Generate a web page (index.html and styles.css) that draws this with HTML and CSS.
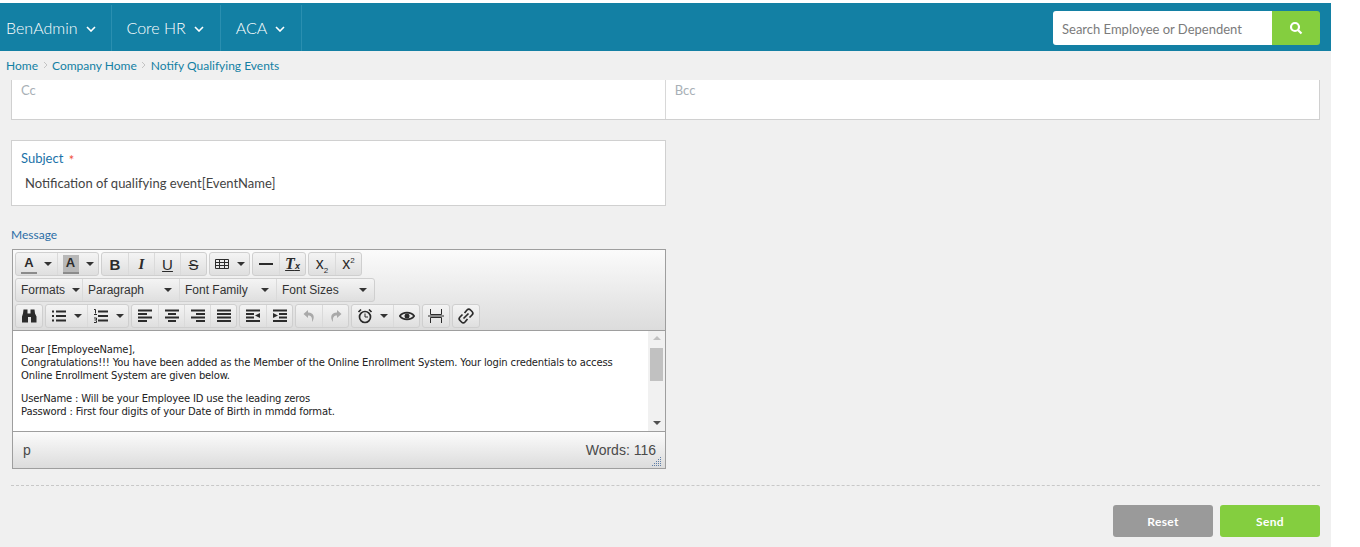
FILE: index.html
```html
<!DOCTYPE html>
<html lang="en">
<head>
<meta charset="utf-8">
<title>Notify Qualifying Events</title>
<link rel="stylesheet" href="styles.css">
</head>
<body>
<div class="page">
  <header class="topbar">
    <nav class="mainnav">
      <a class="navitem navfirst">BenAdmin <svg class="chev" viewBox="0 0 10 6"><path d="M1 1l4 4 4-4"/></svg></a>
      <a class="navitem">Core HR <svg class="chev" viewBox="0 0 10 6"><path d="M1 1l4 4 4-4"/></svg></a>
      <a class="navitem">ACA <svg class="chev" viewBox="0 0 10 6"><path d="M1 1l4 4 4-4"/></svg></a>
    </nav>
    <form class="search">
      <span class="searchinput">Search Employee or Dependent</span>
      <span class="searchbtn"><svg viewBox="0 0 14 14" class="searchicon"><circle cx="6" cy="6" r="4"/><path d="M9 9l3.5 3.5"/></svg></span>
    </form>
  </header>
  <div class="crumbs"><a>Home</a><svg class="sep" viewBox="0 0 5 8"><path d="M1 1l3 3-3 3"/></svg><a>Company Home</a><svg class="sep" viewBox="0 0 5 8"><path d="M1 1l3 3-3 3"/></svg><a>Notify Qualifying Events</a></div>
  <main class="content">
    <div class="ccrow">
      <div class="cccell">Cc</div>
      <div class="cccell">Bcc</div>
    </div>
    <div class="subject">
      <div class="subjectlabel">Subject <span class="req">*</span></div>
      <div class="subjectvalue">Notification of qualifying event[EventName]</div>
    </div>
    <div class="msglabel">Message</div>
    <div class="editor">
      <div class="toolbars">
        <div class="tbrow">
          <div class="grp">
            <span class="btn w42"><span class="colora">A</span><i class="caret"></i></span>
            <span class="btn w42"><span class="colora shaded">A</span><i class="caret"></i></span>
          </div>
          <div class="grp">
            <span class="btn"><b class="fmt">B</b></span><span class="btn"><i class="fmt italicf">I</i></span><span class="btn"><u class="fmt">U</u></span><span class="btn"><s class="fmt">S</s></span>
          </div>
          <div class="grp">
            <span class="btn w41"><svg class="ic" viewBox="0 0 16 16"><path class="thin" d="M1.500 3.500h13v9h-13zM1.500 6.500h13M1.500 9.500h13M5.500 3.500v9M10.500 3.500v9"/></svg><i class="caret"></i></span>
          </div>
          <div class="grp">
            <span class="btn w27"><svg class="ic" viewBox="0 0 16 16"><path class="thick" d="M1 8h14"/></svg></span>
            <span class="btn w27"><span class="clearf">T<small>x</small></span></span>
          </div>
          <div class="grp">
            <span class="btn w27"><span class="script">x<sub>2</sub></span></span>
            <span class="btn w27"><span class="script">x<sup>2</sup></span></span>
          </div>
        </div>
        <div class="tbrow">
          <div class="grp">
            <span class="btn sel w67">Formats<i class="caret"></i></span>
            <span class="btn sel w97">Paragraph<i class="caret"></i></span>
            <span class="btn sel w97">Font Family<i class="caret"></i></span>
            <span class="btn sel w99">Font Sizes<i class="caret"></i></span>
          </div>
        </div>
        <div class="tbrow">
          <div class="grp">
            <span class="btn w28"><svg class="ic" viewBox="0 0 16 16"><path class="fill" d="M2.500 1.500h4v4h3v-4h4l.5 4 1.500 3v6h-5.500V9h-3v5.500H1v-6l1-3z"/></svg></span>
          </div>
          <div class="grp">
            <span class="btn w42"><svg class="ic" viewBox="0 0 16 16"><path class="dash" d="M1 3.500h2M1 8h2M1 12.500h2M5 3.500h10M5 8h10M5 12.500h10"/></svg><i class="caret"></i></span>
            <span class="btn w42"><svg class="ic" viewBox="0 0 16 16"><path class="dash" d="M5 3.500h10M5 8h10M5 12.500h10"/><path class="thin" d="M1 1.500h1.500v4M1 6.500h3M1 10h2.500v2H1.500M1 14.500h2.500v-2"/></svg><i class="caret"></i></span>
          </div>
          <div class="grp">
            <span class="btn"><svg class="ic" viewBox="0 0 16 16"><path class="dash" d="M1 2.500h14M1 6h9M1 9.500h14M1 13h9"/></svg></span>
            <span class="btn"><svg class="ic" viewBox="0 0 16 16"><path class="dash" d="M1 2.500h14M4 6h8M1 9.500h14M4 13h8"/></svg></span>
            <span class="btn"><svg class="ic" viewBox="0 0 16 16"><path class="dash" d="M1 2.500h14M6 6h9M1 9.500h14M6 13h9"/></svg></span>
            <span class="btn"><svg class="ic" viewBox="0 0 16 16"><path class="dash" d="M1 2.500h14M1 6h14M1 9.500h14M1 13h14"/></svg></span>
          </div>
          <div class="grp">
            <span class="btn w27"><svg class="ic" viewBox="0 0 16 16"><path class="dash" d="M1 2.500h14M1 13h14M1 6h8M1 9.500h8"/><path class="fill" d="M15 5v5l-5-2.500z"/></svg></span>
            <span class="btn w27"><svg class="ic" viewBox="0 0 16 16"><path class="dash" d="M1 2.500h14M1 13h14M7 6h8M7 9.500h8"/><path class="fill" d="M1 5v5l5-2.500z"/></svg></span>
          </div>
          <div class="grp">
            <span class="btn w27"><svg class="ic" viewBox="0 0 16 16"><path class="faded" d="M7 2L2.500 6 7 10V7.500c3 0 4.500 1.500 4 6.500 3-4 2.500-9.500-4-9.500z"/></svg></span>
            <span class="btn w27"><svg class="ic" viewBox="0 0 16 16"><path class="faded" d="M9 2l4.500 4L9 10V7.500c-3 0-4.500 1.500-4 6.500-3-4-2.500-9.500 4-9.500z"/></svg></span>
          </div>
          <div class="grp">
            <span class="btn w42"><svg class="ic" viewBox="0 0 16 16"><circle class="thick2" cx="8" cy="9" r="5.500"/><path class="thin" d="M8 5.500V9h3"/><path class="thick2" d="M1.500 4L4 1.500M14.500 4L12 1.500"/></svg><i class="caret"></i></span>
            <span class="btn w27"><svg class="ic" viewBox="0 0 16 16"><path class="thick2" d="M.800 8C4 3.500 12 3.500 15.200 8 12 12.500 4 12.500.800 8z"/><circle class="fill" cx="8" cy="8" r="2.500"/></svg></span>
          </div>
          <div class="grp">
            <span class="btn w28"><svg class="ic" viewBox="0 0 16 16"><path class="thin" d="M2.500 1v5.500h11V1M2.500 15V9.500h11V15M0 8h16"/></svg></span>
          </div>
          <div class="grp">
            <span class="btn w28"><svg class="ic" viewBox="0 0 16 16"><path class="thick2" d="M6.500 5l2.500-3c1-1 2.500-1 3.500 0l1.500 1.500c1 1 1 2.500 0 3.500l-2.500 2.500M9.500 11L7 14c-1 1-2.500 1-3.500 0L2 12.500c-1-1-1-2.500 0-3.500l2.500-2.500M5.500 10.500l5-5"/></svg></span>
          </div>
        </div>
      </div>
      <div class="editbody">
        <div class="edittext">
          <p>Dear [EmployeeName],<br>Congratulations!!! You have been added as the Member of the Online Enrollment System. Your login credentials to access Online Enrollment System are given below.</p>
          <p>UserName : Will be your Employee ID use the leading zeros<br>Password : First four digits of your Date of Birth in mmdd format.</p>
        </div>
        <div class="scrollbar">
          <i class="arrowup"></i>
          <div class="thumb"></div>
          <i class="arrowdown"></i>
        </div>
      </div>
      <div class="statusbar">
        <span>p</span>
        <span>Words: 116</span>
        <svg class="grip" viewBox="0 0 10 10"><path d="M8 1.500h2M6 3.500h4M4 5.500h6M2 7.500h8M0 9.500h10"/></svg>
      </div>
    </div>
    <hr class="rule">
    <div class="actions">
      <span class="action reset">Reset</span>
      <span class="action send">Send</span>
    </div>
  </main>
</div>
</body>
</html>
```
FILE: styles.css
```css
* { box-sizing: border-box; }
html, body { margin: 0; padding: 0; background: #fff; }
body { font-family: "Lato", sans-serif; overflow: hidden; height: 547px; }
.page { width: 1331px; height: 547px; background: #f0f0f0; padding-top: 3px; box-shadow: inset 0 3px 0 #fff; }

.topbar { height: 48px; background: #1380a4; display: flex; justify-content: space-between; align-items: stretch; padding-right: 11px; }
.mainnav { display: flex; }
.navitem { display: flex; align-items: center; gap: 8px; padding: 0 16px 2px 15px; color: #fff; font-size: 16px; font-weight: 300; border-right: 1px solid #2a8fb0; margin-top: 2px; }
.navfirst { padding: 0 15px 2px 6px; }
.chev { width: 10px; height: 6px; fill: none; stroke: #fff; stroke-width: 1.6; margin-top: 3px; }
.search { display: flex; width: 267px; height: 34px; margin-top: 8px; border-radius: 3px; overflow: hidden; }
.searchinput { width: 219px; background: #fff; color: #7b7b7b; font-size: 13px; padding-left: 9px; line-height: 37px; }
.searchbtn { flex: 1; background: #84ce3f; display: flex; align-items: center; justify-content: center; }
.searchicon { width: 14px; height: 14px; fill: none; stroke: #fff; stroke-width: 2.2; }

.crumbs { height: 29px; display: flex; align-items: center; padding: 0 0 1px 6px; font-size: 12px; color: #1380a4; gap: 4.500px; }
.sep { width: 5px; height: 8px; fill: none; stroke: #c4c4c4; stroke-width: 1; }

.content { padding: 0 11px; }
.ccrow { display: flex; height: 40px; background: #fff; border: 1px solid #d0d0d0; border-top: 0; }
.cccell { width: 50%; padding: 2px 9px; color: #a8b0b6; font-size: 13px; }
.cccell:first-child { width: 654px; border-right: 1px solid #d8d8d8; }
.subject { width: 655px; height: 66px; margin-top: 20px; background: #fff; border: 1px solid #d0d0d0; padding: 9px 9px; }
.subjectlabel { color: #1a72a8; font-size: 13px; line-height: 17px; }
.req { color: #f0503a; font-size: 13px; margin-left: 2px; position: relative; top: 2px; }
.subjectvalue { color: #444; font-size: 13px; line-height: 17px; margin: 8px 0 0 4px; }
.msglabel { margin-top: 21px; color: #2c6ea6; font-size: 12px; line-height: 15px; }

.editor { width: 654px; height: 220px; margin: 7px 0 0 1px; border: 1px solid #9e9e9e; box-shadow: 0 0 0 1px #d8d8d8 inset; font-family: "Liberation Sans", sans-serif; background: #fff; display: flex; flex-direction: column; }
.toolbars { height: 81px; padding: 2px 2px 0; background: linear-gradient(#fbfbfb, #dcdcdc); border-bottom: 1px solid #9e9e9e; display: flex; flex-direction: column; gap: 2px; }
.tbrow { display: flex; gap: 2px; height: 24px; }
.grp { display: flex; height: 24px; border: 1px solid #cfcfcf; border-radius: 3px; background: linear-gradient(#f4f4f4, #dfdfdf); overflow: hidden; }
.btn { width: 26px; height: 22px; display: flex; align-items: center; justify-content: center; gap: 7px; color: #333; font-size: 12px; position: relative; }
.btn + .btn { border-left: 1px solid #dadada; }
.w27 { width: 26px; }
.w28 { width: 26px; }
.w41 { width: 39px; }
.w42 { width: 41px; }
.w67 { width: 66px; }
.w97 { width: 97px; }
.w99 { width: 98px; }
.sel { justify-content: space-between; padding: 0 7px 0 5px; }
.caret { width: 0; height: 0; border: 4px solid transparent; border-top: 4px solid #333; border-bottom: 0; flex: none; }
.colora { font-weight: bold; font-size: 13px; width: 16px; height: 19px; text-align: center; line-height: 16px; border-bottom: 2px solid #8b8b8b; color: #2b2b2b; }
.shaded { background: #b8b8b8; }
.fmt { font-size: 15px; color: #2b2b2b; font-family: "Liberation Sans", sans-serif; }
.italicf { font-weight: bold; font-family: "Liberation Serif", serif; }
.clearf { font-family: "Liberation Serif", serif; font-style: italic; font-size: 16px; font-weight: bold; color: #2b2b2b; text-decoration: underline; }
.clearf small { font-size: 9px; font-family: "Liberation Sans", sans-serif; }
.script { font-size: 16px; color: #2b2b2b; line-height: 16px; }
.script sub, .script sup { font-size: 8px; line-height: 0; }
.ic { width: 16px; height: 16px; flex: none; }
.thin { fill: none; stroke: #2b2b2b; stroke-width: 1; }
.thick { fill: none; stroke: #2b2b2b; stroke-width: 2; }
.thick2 { fill: none; stroke: #2b2b2b; stroke-width: 1.700; }
.dash { fill: none; stroke: #2b2b2b; stroke-width: 1.800; }
.fill { fill: #2b2b2b; }
.faded { fill: #a9a9a9; }

.editbody { height: 101px; display: flex; background: #fff; border-bottom: 1px solid #9e9e9e; }
.edittext { flex: 1; padding: 12px 20px 0 8px; font-family: "DejaVu Sans", sans-serif; font-size: 10px; line-height: 13px; color: #222; overflow: hidden; letter-spacing: -.16px; }
.edittext p { margin: 0 0 10px; }
.scrollbar { width: 17px; background: #f1f1f1; display: flex; flex-direction: column; align-items: center; padding: 5px 2px; }
.thumb { width: 13px; height: 33px; background: #c1c1c1; margin-top: 8px; }
.arrowup, .arrowdown { width: 0; height: 0; border: 4px solid transparent; flex: none; }
.arrowup { border-bottom: 4px solid #c1c1c1; border-top: 0; }
.arrowdown { border-top: 4px solid #505050; border-bottom: 0; margin-top: auto; margin-bottom: 1px; }
.statusbar { flex: 1; display: flex; justify-content: space-between; align-items: center; padding: 0 9px 0 10px; background: linear-gradient(#fbfbfb, #dcdcdc); font-size: 14px; color: #4a4a4a; position: relative; }
.grip { position: absolute; right: 3px; bottom: 2px; width: 10px; height: 10px; fill: none; stroke: #5f7fa8; stroke-width: 1; stroke-dasharray: 1 1; }

.rule { margin: 16px 0 0; border: 0; border-top: 1px dashed #c8c8c8; width: 1309px; }
.actions { display: flex; justify-content: flex-end; gap: 7px; margin-top: 19px; width: 1309px; }
.action { width: 100px; height: 32px; border-radius: 3px; color: #fff; font-size: 12px; font-weight: bold; display: flex; align-items: center; justify-content: center; letter-spacing: .3px; }
.reset { background: #9a9a9a; }
.send { background: #84ce3f; }
```
